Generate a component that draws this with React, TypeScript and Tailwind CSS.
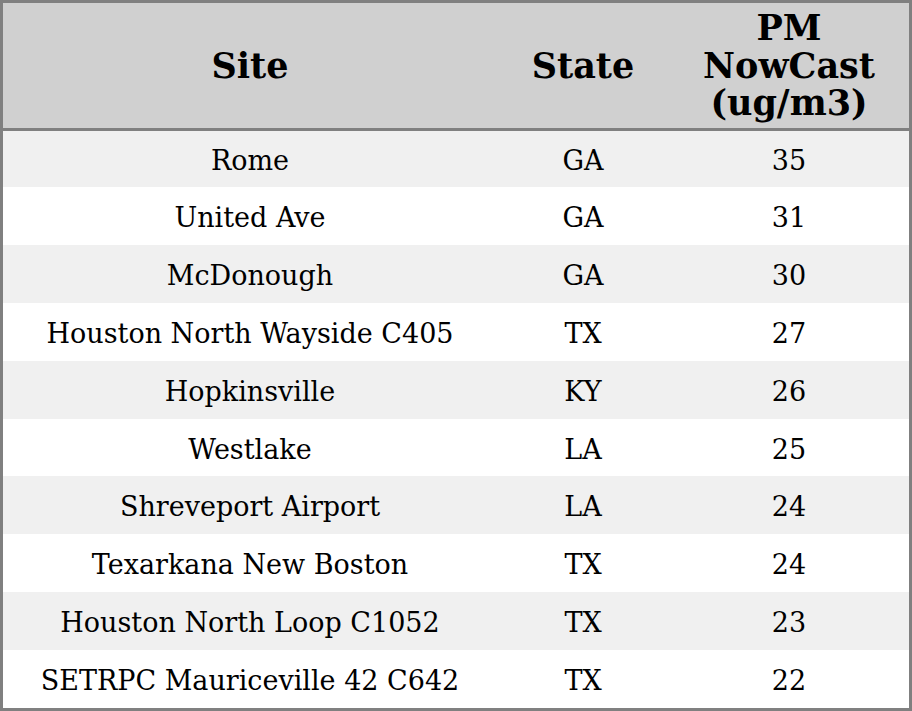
import React from "react";

const rows: [string, string, string][] = [
  ["Rome", "GA", "35"],
  ["United Ave", "GA", "31"],
  ["McDonough", "GA", "30"],
  ["Houston North Wayside C405", "TX", "27"],
  ["Hopkinsville", "KY", "26"],
  ["Westlake", "LA", "25"],
  ["Shreveport Airport", "LA", "24"],
  ["Texarkana New Boston", "TX", "24"],
  ["Houston North Loop C1052", "TX", "23"],
  ["SETRPC Mauriceville 42 C642", "TX", "22"],
];

export default function App() {
  return (
    <div
      className="w-[912px] h-[711px] border-[3px] border-[#808080] flex flex-col text-black"
      style={{ fontFamily: '"DejaVu Serif", serif' }}
    >
      <div className="h-[128px] shrink-0 border-b-[3px] border-[#808080] bg-[#d0d0d0] grid grid-cols-[494px_172px_240px] items-center text-center font-bold text-[35px] leading-[37.5px]">
        <div>Site</div>
        <div>State</div>
        <div>
          PM
          <br />
          NowCast
          <br />
          (ug/m3)
        </div>
      </div>
      {rows.map((r, i) => (
        <div
          key={i}
          className={`${i === 0 ? "h-[56px] shrink-0 pt-[3px]" : "flex-1 pt-[4px]"} grid grid-cols-[494px_172px_240px] items-center text-center text-[27px] leading-[32px] ${
            i % 2 === 0 ? "bg-[#f0f0f0]" : "bg-white"
          }`}
        >
          <div>{r[0]}</div>
          <div>{r[1]}</div>
          <div>{r[2]}</div>
        </div>
      ))}
    </div>
  );
}
